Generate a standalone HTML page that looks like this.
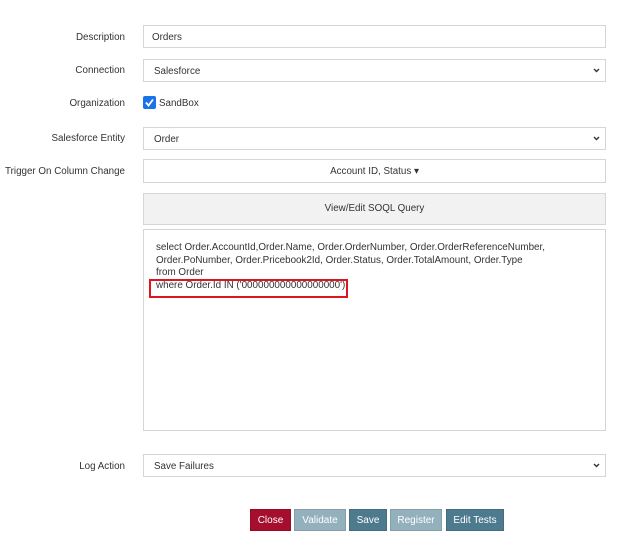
<!DOCTYPE html>
<html><head><style>
body{margin:0;width:624px;height:547px;background:#fff;font-family:"Liberation Sans",sans-serif;font-size:9.8px;color:#333;position:relative;overflow:hidden}
.l{position:absolute;right:499px;text-align:right;white-space:nowrap}
.b{position:absolute;left:143px;width:463px;border:1px solid #d6d6d6;background:#fff;box-sizing:border-box}
.t{position:absolute;white-space:nowrap}
.chev{position:absolute;right:5px;top:50%;margin-top:-3px}
.btn{position:absolute;top:509px;height:22px;color:#fff;text-align:center;line-height:22px;font-size:10px;box-sizing:border-box;border:1px solid rgba(0,0,0,.1)}
</style></head><body>
<div class="l" style="top:32px">Description</div>
<div class="b" style="top:25px;height:23px"><span class="t" style="left:8px;top:6px">Orders</span></div>
<div class="l" style="top:65px">Connection</div>
<div class="b" style="top:59px;height:23px"><span class="t" style="left:10px;top:6px">Salesforce</span><svg class="chev" width="7" height="5" viewBox="0 0 7 5"><path d="M1 1L3.5 3.5L6 1" stroke="#333" stroke-width="1.4" fill="none"/></svg></div>
<div class="l" style="top:98px">Organization</div>
<div style="position:absolute;left:143px;top:96px;width:13px;height:13px;background:#1a73e8;border-radius:2px"><svg width="13" height="13" viewBox="0 0 13 13"><path d="M3 6.5L5.5 9.5L10 3.5" stroke="#fff" stroke-width="1.8" fill="none"/></svg></div>
<div class="t" style="left:159px;top:98px">SandBox</div>
<div class="l" style="top:133px">Salesforce Entity</div>
<div class="b" style="top:127px;height:23px"><span class="t" style="left:10px;top:6px">Order</span><svg class="chev" width="7" height="5" viewBox="0 0 7 5"><path d="M1 1L3.5 3.5L6 1" stroke="#333" stroke-width="1.4" fill="none"/></svg></div>
<div class="l" style="top:166px">Trigger On Column Change</div>
<div class="b" style="top:159px;height:24px;text-align:center;line-height:23px">Account ID, Status ▾</div>
<div class="b" style="top:193px;height:32px;background:#f2f2f2;text-align:center;line-height:30px">View/Edit SOQL Query</div>
<div class="b" style="top:229px;height:202px;background:#fff">
<div class="t" style="left:12px;top:12px;line-height:12.5px;font-size:9.85px">select Order.AccountId,Order.Name, Order.OrderNumber, Order.OrderReferenceNumber,<br>Order.PoNumber, Order.Pricebook2Id, Order.Status, Order.TotalAmount, Order.Type<br>from Order<br>where Order.Id IN ('000000000000000000')</div>
</div>
<div style="position:absolute;left:149px;top:279px;width:199px;height:19px;border:2px solid #e0141e;box-sizing:border-box"></div>
<div class="l" style="top:461px">Log Action</div>
<div class="b" style="top:454px;height:23px"><span class="t" style="left:10px;top:6px">Save Failures</span><svg class="chev" width="7" height="5" viewBox="0 0 7 5"><path d="M1 1L3.5 3.5L6 1" stroke="#333" stroke-width="1.4" fill="none"/></svg></div>
<div class="btn" style="left:250px;width:41px;background:#a50e2d">Close</div>
<div class="btn" style="left:294px;width:52px;background:#93b1bd">Validate</div>
<div class="btn" style="left:349px;width:38px;background:#4d7a8d">Save</div>
<div class="btn" style="left:390px;width:52px;background:#93b1bd">Register</div>
<div class="btn" style="left:446px;width:58px;background:#4d7a8d">Edit Tests</div>
</body></html>
